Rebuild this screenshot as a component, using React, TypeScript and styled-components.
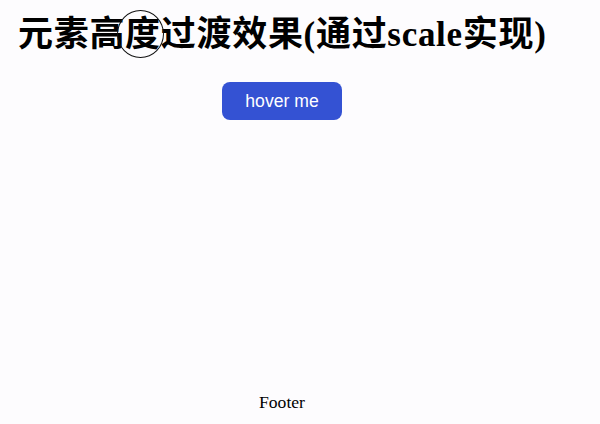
import styled, { createGlobalStyle } from 'styled-components';

const GlobalStyle = createGlobalStyle`
  html, body {
    margin: 0;
    padding: 0;
    background: #fdfcfe;
  }
  body {
    font-family: "Liberation Serif", "Noto Sans CJK SC", serif;
  }
`;

const Page = styled.div`
  height: 424px;
  width: 528px;
  padding: 0 54px 0 18px;
  display: flex;
  flex-direction: column;
  align-items: center;
  box-sizing: content-box;
`;

const TitleWrap = styled.div`
  position: relative;
  align-self: stretch;
  padding-top: 15px;
`;

const Title = styled.h1`
  margin: 0;
  font-family: "Liberation Serif", "Noto Sans CJK SC", serif;
  font-size: 35px;
  line-height: 40px;
  font-weight: 700;
  color: #000;
  white-space: nowrap;
  letter-spacing: 0.7px;
`;

const CursorRing = styled.div`
  position: absolute;
  left: 99px;
  top: 10px;
  width: 45px;
  height: 46px;
  border: 1.8px solid #111;
  border-radius: 50%;
  pointer-events: none;
`;

const HoverButton = styled.button`
  margin-top: 27px;
  width: 120px;
  height: 38px;
  border: none;
  border-radius: 8px;
  background: #3452d3;
  color: #fff;
  font-family: "Liberation Sans", Arial, sans-serif;
  font-size: 17.6px;
  cursor: pointer;
`;

const Spacer = styled.div`
  flex: 1;
`;

const Footer = styled.footer`
  font-family: "Liberation Serif", serif;
  font-size: 17.6px;
  line-height: 20px;
  color: #000;
  padding-bottom: 12px;
`;

export default function App() {
  return (
    <>
      <GlobalStyle />
      <Page>
        <TitleWrap>
          <Title>元素高度过渡效果(通过scale实现)</Title>
          <CursorRing />
        </TitleWrap>
        <HoverButton>hover me</HoverButton>
        <Spacer />
        <Footer>Footer</Footer>
      </Page>
    </>
  );
}
